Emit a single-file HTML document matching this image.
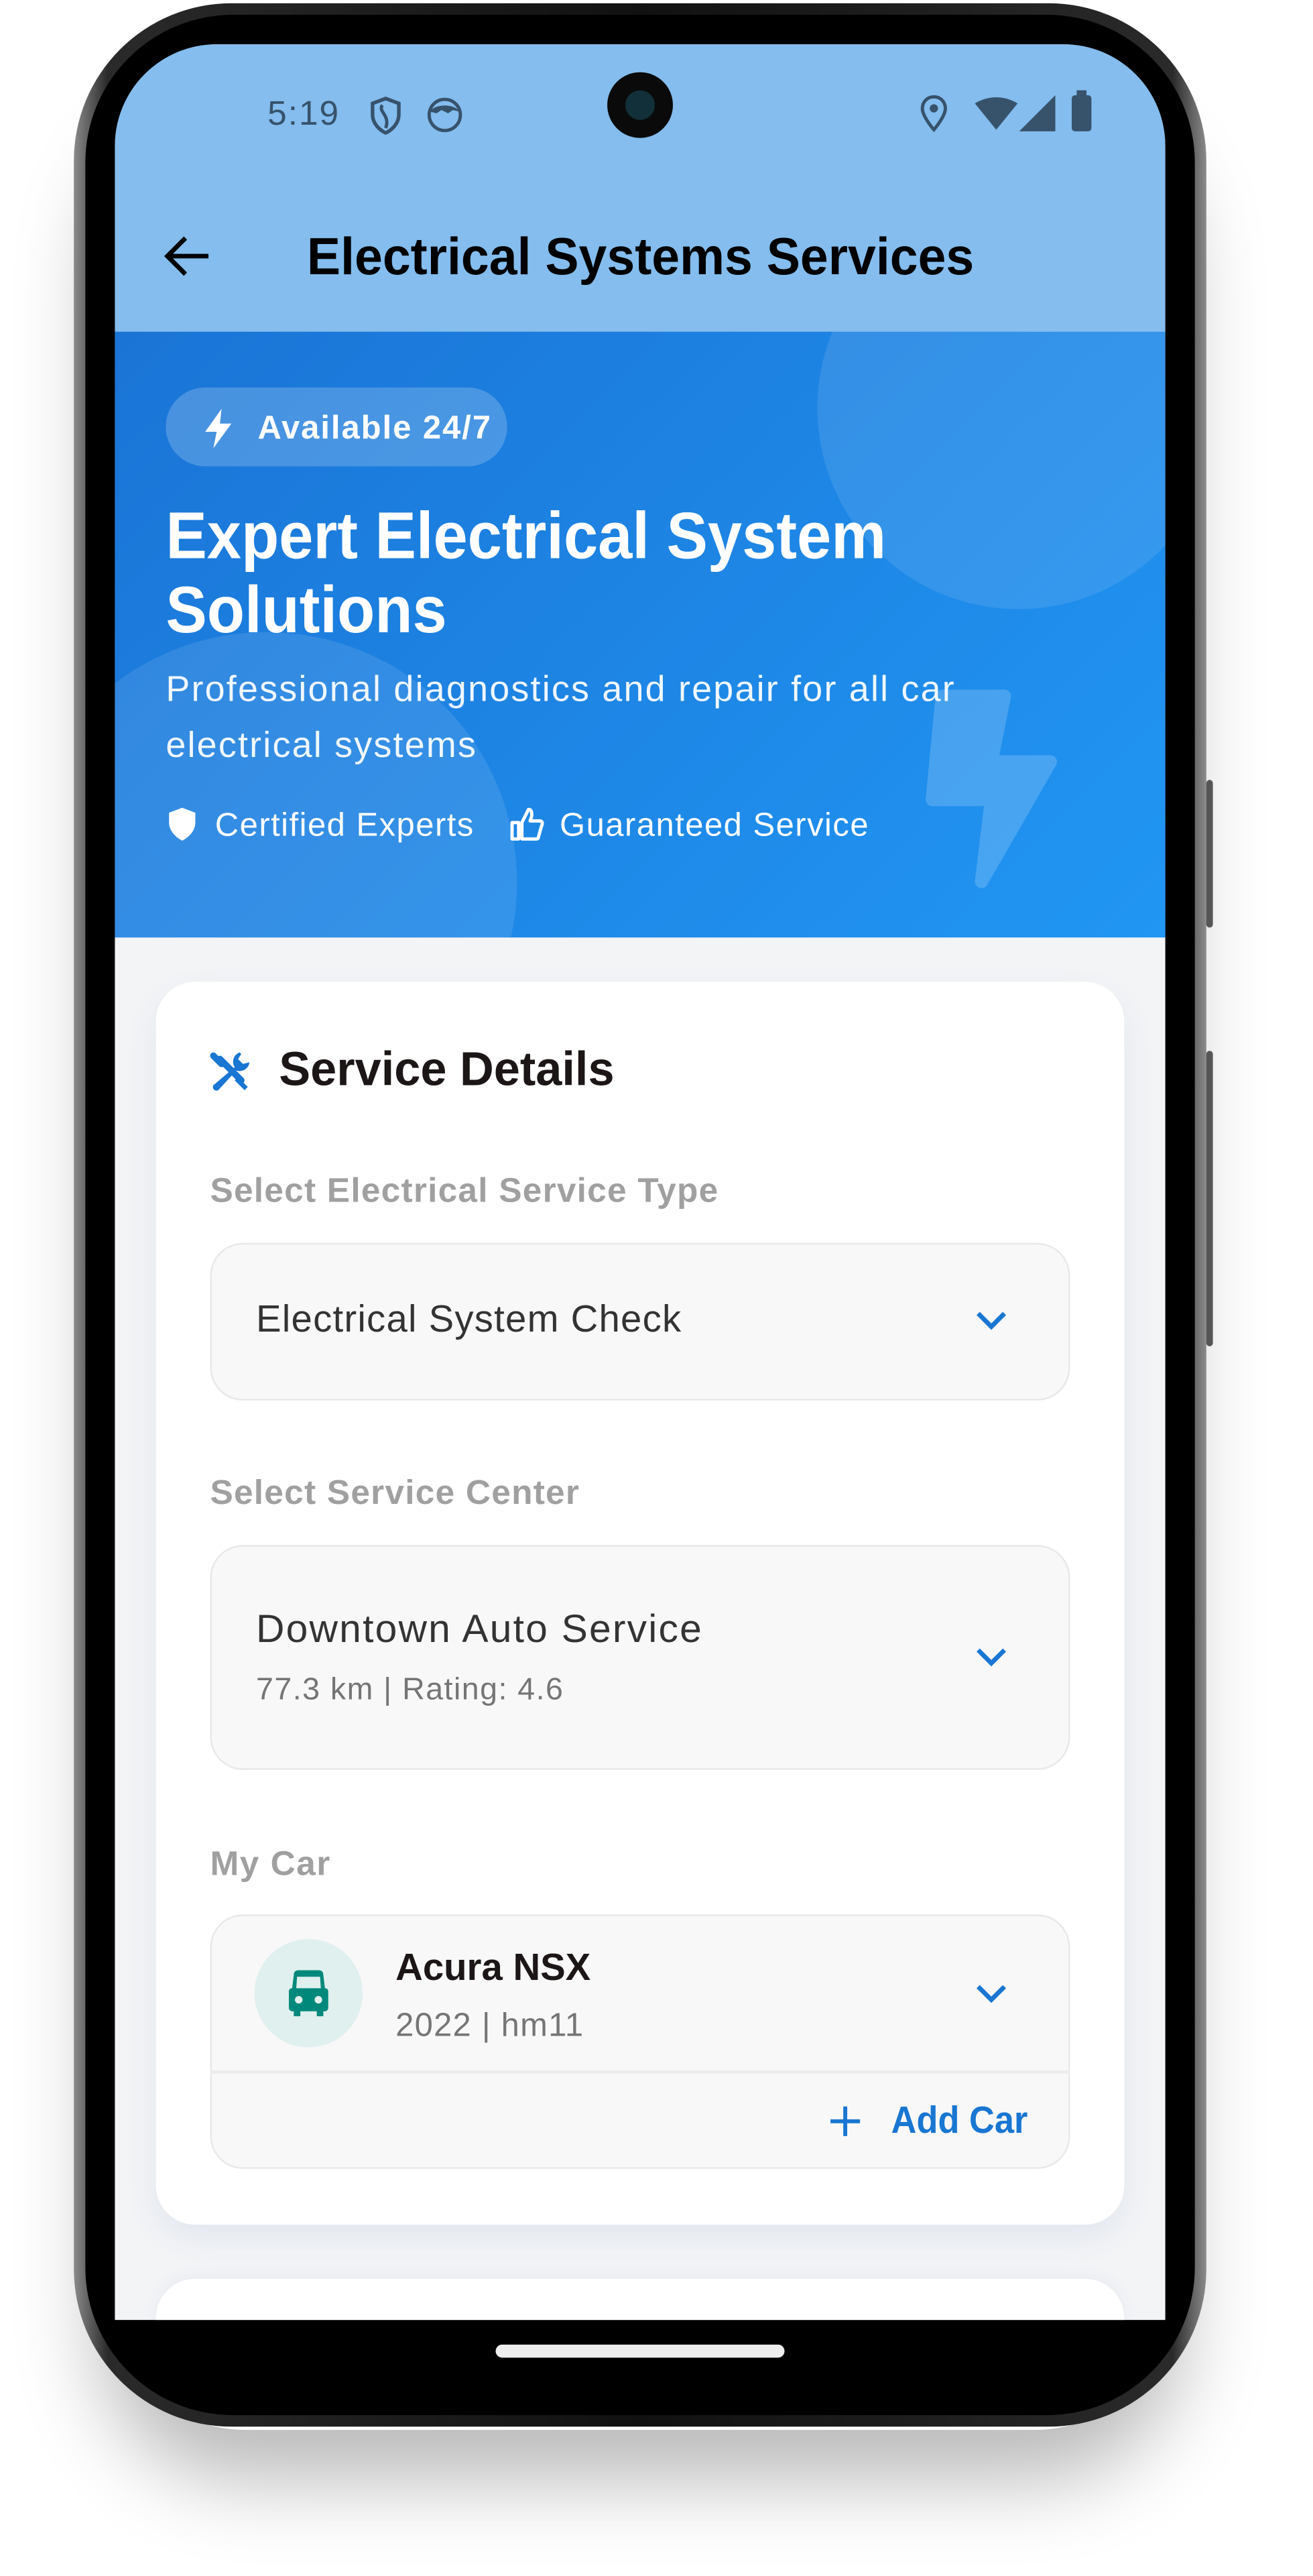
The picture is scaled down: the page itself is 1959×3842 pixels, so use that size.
<!DOCTYPE html>
<html><head><meta charset="utf-8">
<style>
html,body{margin:0;padding:0;width:1959px;height:3841px;overflow:hidden;background:#fff;}
#s{position:absolute;left:0;top:0;width:800px;height:1569px;transform:scale(2.44875);transform-origin:0 0;font-family:"Liberation Sans",Arial,sans-serif;}
.a{position:absolute;}
.n{position:absolute;white-space:nowrap;transform-origin:0 50%;line-height:1;}
</style></head><body>
<div id="s">
 <div class="a" style="left:60px;top:40px;width:660px;height:1440px;border-radius:90px;box-shadow:0 30px 50px rgba(0,0,0,.28);"></div>
 <div class="a" style="left:45px;top:2px;width:690px;height:1476px;border-radius:96px;background:linear-gradient(90deg,#8a8a8a,#2a2a2a 3%,#111 50%,#2a2a2a 97%,#8a8a8a);"></div>
 <div class="a" style="left:52px;top:9px;width:676px;height:1462px;border-radius:90px;background:#000;"></div>
 <div class="a" style="left:735px;top:475px;width:4px;height:90px;background:#555;border-radius:2px;"></div>
 <div class="a" style="left:735px;top:640px;width:4px;height:180px;background:#555;border-radius:2px;"></div>
 <div class="a" style="left:70px;top:27px;width:640px;height:1386px;border-radius:62px 62px 0 0;overflow:hidden;background:#F3F4F6;">
  <div class="a" style="left:0;top:0;width:640px;height:175px;background:#84BDEE;"></div>
  <div class="n" style="left:93px;top:32px;font-size:21px;color:#37526b;letter-spacing:.8px;">5:19</div>
  <svg class="a" style="left:154px;top:31px" width="22" height="24" viewBox="0 0 22 24"><path d="M11 2 L19 5 V12 C19 17 15 21 11 23 C7 21 3 17 3 12 V5 Z" fill="none" stroke="#37526b" stroke-width="2.2"/><path d="M9 6 C6 10 14 12 11 20" fill="none" stroke="#37526b" stroke-width="2"/></svg>
  <svg class="a" style="left:190px;top:32px" width="22" height="22" viewBox="0 0 22 22"><circle cx="11" cy="11" r="9.5" fill="none" stroke="#37526b" stroke-width="2"/><path d="M2 9 C5 4 17 4 20 9 L16 8 L13 10 L9 8 L6 10 Z" fill="#37526b"/></svg>
  <div class="a" style="left:300px;top:17px;width:40px;height:40px;border-radius:50%;background:#0a0a0a;"></div>
  <div class="a" style="left:311px;top:28px;width:18px;height:18px;border-radius:50%;background:#12303a;"></div>
  <svg class="a" style="left:490px;top:30px" width="18" height="24" viewBox="0 0 18 24"><path d="M9 2 C4.5 2 2 5.5 2 9 C2 14 9 22 9 22 C9 22 16 14 16 9 C16 5.5 13.5 2 9 2Z" fill="none" stroke="#37526b" stroke-width="2"/><circle cx="9" cy="9" r="2.5" fill="#37526b"/></svg>
  <svg class="a" style="left:523px;top:32px" width="28" height="20" viewBox="0 0 28 20"><path d="M1 4 C9 -1 19 -1 27 4 L14 20 Z" fill="#37526b"/></svg>
  <svg class="a" style="left:550px;top:30px" width="24" height="24" viewBox="0 0 24 24"><path d="M23 1 V23 H1 Z" fill="#37526b"/></svg>
  <div class="a" style="left:583px;top:31px;width:12px;height:22px;background:#37526b;border-radius:2px;"></div>
  <div class="a" style="left:586px;top:28px;width:6px;height:4px;background:#37526b;"></div>
  <svg class="a" style="left:29px;top:116px" width="30" height="26" viewBox="0 0 30 26"><path d="M28 13 H3 M14 2 L3 13 L14 24" fill="none" stroke="#000" stroke-width="2.8"/></svg>
  <div class="n" style="left:117px;top:113px;font-size:32px;font-weight:bold;color:#000;transform:scaleX(.96);">Electrical Systems Services</div>

  <div class="a" style="left:0;top:175px;width:640px;height:369px;overflow:hidden;background:linear-gradient(135deg,#1a74d6,#2196F3);">
   <div class="a" style="left:428px;top:-76px;width:245px;height:245px;border-radius:50%;background:rgba(255,255,255,.1);"></div>
   <div class="a" style="left:-60px;top:183px;width:305px;height:305px;border-radius:50%;background:rgba(255,255,255,.1);"></div>
   <svg class="a" style="left:490px;top:217px;opacity:.18" width="90" height="122" viewBox="0 0 90 122"><path d="M14 5 H52 L44 45 H80 L38 118 L44 68 H8 Z" fill="#fff" stroke="#fff" stroke-width="8" stroke-linejoin="round"/></svg>
   <div class="a" style="left:31px;top:34px;width:208px;height:48px;border-radius:24px;background:rgba(255,255,255,.2);"></div>
   <svg class="a" style="left:52px;top:46px" width="22" height="26" viewBox="0 0 22 26"><path d="M13 1 L3 15 H10 L8 25 L19 10 H12 Z" fill="#fff"/></svg>
   <div class="n" style="left:87px;top:49px;font-size:20px;font-weight:bold;color:#fff;letter-spacing:.8px;">Available 24/7</div>
   <div class="n" style="left:31px;top:105px;font-size:40px;font-weight:bold;color:#fff;transform:scaleX(.94);">Expert Electrical System</div>
   <div class="n" style="left:31px;top:150px;font-size:40px;font-weight:bold;color:#fff;transform:scaleX(.94);">Solutions</div>
   <div class="n" style="left:31px;top:207px;font-size:22px;color:rgba(255,255,255,.93);letter-spacing:.9px;">Professional diagnostics and repair for all car</div>
   <div class="n" style="left:31px;top:241px;font-size:22px;color:rgba(255,255,255,.93);letter-spacing:.9px;">electrical systems</div>
   <svg class="a" style="left:31px;top:289px" width="20" height="22" viewBox="0 0 20 22"><path d="M10 1 L18 4 V10 C18 15 14 19 10 21 C6 19 2 15 2 10 V4 Z" fill="#fff"/></svg>
   <div class="n" style="left:61px;top:291px;font-size:20px;color:#fff;letter-spacing:.6px;">Certified Experts</div>
   <svg class="a" style="left:240px;top:289px" width="22" height="22" viewBox="0 0 22 22"><path d="M2 10 H6 V20 H2 Z M8 10 L12 2 C14 2 14 4 14 6 L13 9 H19 C20 9 21 10 20 12 L18 19 C18 20 17 20 16 20 H8 Z" fill="none" stroke="#fff" stroke-width="2" stroke-linejoin="round"/></svg>
   <div class="n" style="left:271px;top:291px;font-size:20px;color:#fff;letter-spacing:.6px;">Guaranteed Service</div>
  </div>

  <div class="a" style="left:25px;top:571px;width:590px;height:757px;border-radius:24px;background:#fff;box-shadow:0 8px 20px rgba(30,80,150,.08);"></div>
  <svg class="a" style="left:56px;top:612px" width="28" height="28" viewBox="0 0 28 28">
   <path d="M4 4 L9 9 M8 6 L21 19" stroke="#1976D2" stroke-width="4" stroke-linecap="round"/>
   <path d="M19 17 L25 23 L23 25 L17 19 Z" fill="#1976D2"/>
   <path d="M20 2 A6 6 0 0 0 17 11 L4 22 A2.2 2.2 0 0 0 7 25 L18 13 A6 6 0 0 0 26 8 L22 9 L19 6 L21 3 Z" fill="#1976D2"/>
  </svg>
  <div class="n" style="left:100px;top:611px;font-size:29px;font-weight:bold;color:#1c1616;transform:scaleX(.99);">Service Details</div>
  <div class="n" style="left:58px;top:688px;font-size:21px;font-weight:bold;color:#a0a0a0;letter-spacing:.5px;">Select Electrical Service Type</div>
  <div class="a" style="left:58px;top:730px;width:522px;height:94px;border-radius:20px;background:#F8F8F8;border:1px solid #E8E8E8;"></div>
  <div class="n" style="left:86px;top:765px;font-size:23px;color:#333;letter-spacing:.5px;">Electrical System Check</div>
  <svg class="a" style="left:524px;top:770px" width="20" height="14" viewBox="0 0 20 14"><path d="M2 3 L10 11 L18 3" fill="none" stroke="#1976D2" stroke-width="2.8"/></svg>
  <div class="n" style="left:58px;top:872px;font-size:21px;font-weight:bold;color:#a0a0a0;letter-spacing:.5px;">Select Service Center</div>
  <div class="a" style="left:58px;top:914px;width:522px;height:135px;border-radius:20px;background:#F8F8F8;border:1px solid #E8E8E8;"></div>
  <div class="n" style="left:86px;top:954px;font-size:24px;color:#333;letter-spacing:.9px;">Downtown Auto Service</div>
  <div class="n" style="left:86px;top:993px;font-size:19px;color:#757575;letter-spacing:.6px;">77.3 km | Rating: 4.6</div>
  <svg class="a" style="left:524px;top:975px" width="20" height="14" viewBox="0 0 20 14"><path d="M2 3 L10 11 L18 3" fill="none" stroke="#1976D2" stroke-width="2.8"/></svg>
  <div class="n" style="left:58px;top:1098px;font-size:21px;font-weight:bold;color:#a0a0a0;letter-spacing:.6px;">My Car</div>
  <div class="a" style="left:58px;top:1139px;width:522px;height:153px;border-radius:20px;background:#F8F8F8;border:1px solid #E8E8E8;"></div>
  <div class="a" style="left:58px;top:1234px;width:524px;height:2px;background:#ECECEC;"></div>
  <div class="a" style="left:85px;top:1154px;width:66px;height:66px;border-radius:50%;background:#E0F0EE;"></div>
  <svg class="a" style="left:104px;top:1172px" width="28" height="30" viewBox="0 0 28 30"><path d="M5 4 C5 2 6 1 8 1 H20 C22 1 23 2 23 4 L24 12 C25.5 12 26 13 26 14 V24 C26 25 25 26 24 26 H23 V29 H19 V26 H9 V29 H5 V26 H4 C3 26 2 25 2 24 V14 C2 13 2.5 12 4 12 Z M7 5 L6.5 12 H21.5 L21 5 Z" fill="#00897B" fill-rule="evenodd"/><circle cx="8" cy="19" r="2.3" fill="#E0F0EE"/><circle cx="20" cy="19" r="2.3" fill="#E0F0EE"/></svg>
  <div class="n" style="left:171px;top:1160px;font-size:23px;font-weight:bold;color:#1c1616;">Acura NSX</div>
  <div class="n" style="left:171px;top:1197px;font-size:20px;color:#757575;letter-spacing:.5px;">2022 | hm11</div>
  <svg class="a" style="left:524px;top:1180px" width="20" height="14" viewBox="0 0 20 14"><path d="M2 3 L10 11 L18 3" fill="none" stroke="#1976D2" stroke-width="2.8"/></svg>
  <svg class="a" style="left:434px;top:1254px" width="22" height="22" viewBox="0 0 22 22"><path d="M11 2 V20 M2 11 H20" stroke="#1976D2" stroke-width="2.4"/></svg>
  <div class="n" style="left:473px;top:1253px;font-size:23px;font-weight:bold;color:#1976D2;transform:scaleX(.93);">Add Car</div>
  <div class="a" style="left:25px;top:1361px;width:590px;height:80px;border-radius:24px;background:#fff;box-shadow:0 -2px 10px rgba(30,80,150,.05);"></div>
 </div>
 <div class="a" style="left:302px;top:1428px;width:176px;height:8px;border-radius:4px;background:#eee;"></div>
</div>
</body></html>
